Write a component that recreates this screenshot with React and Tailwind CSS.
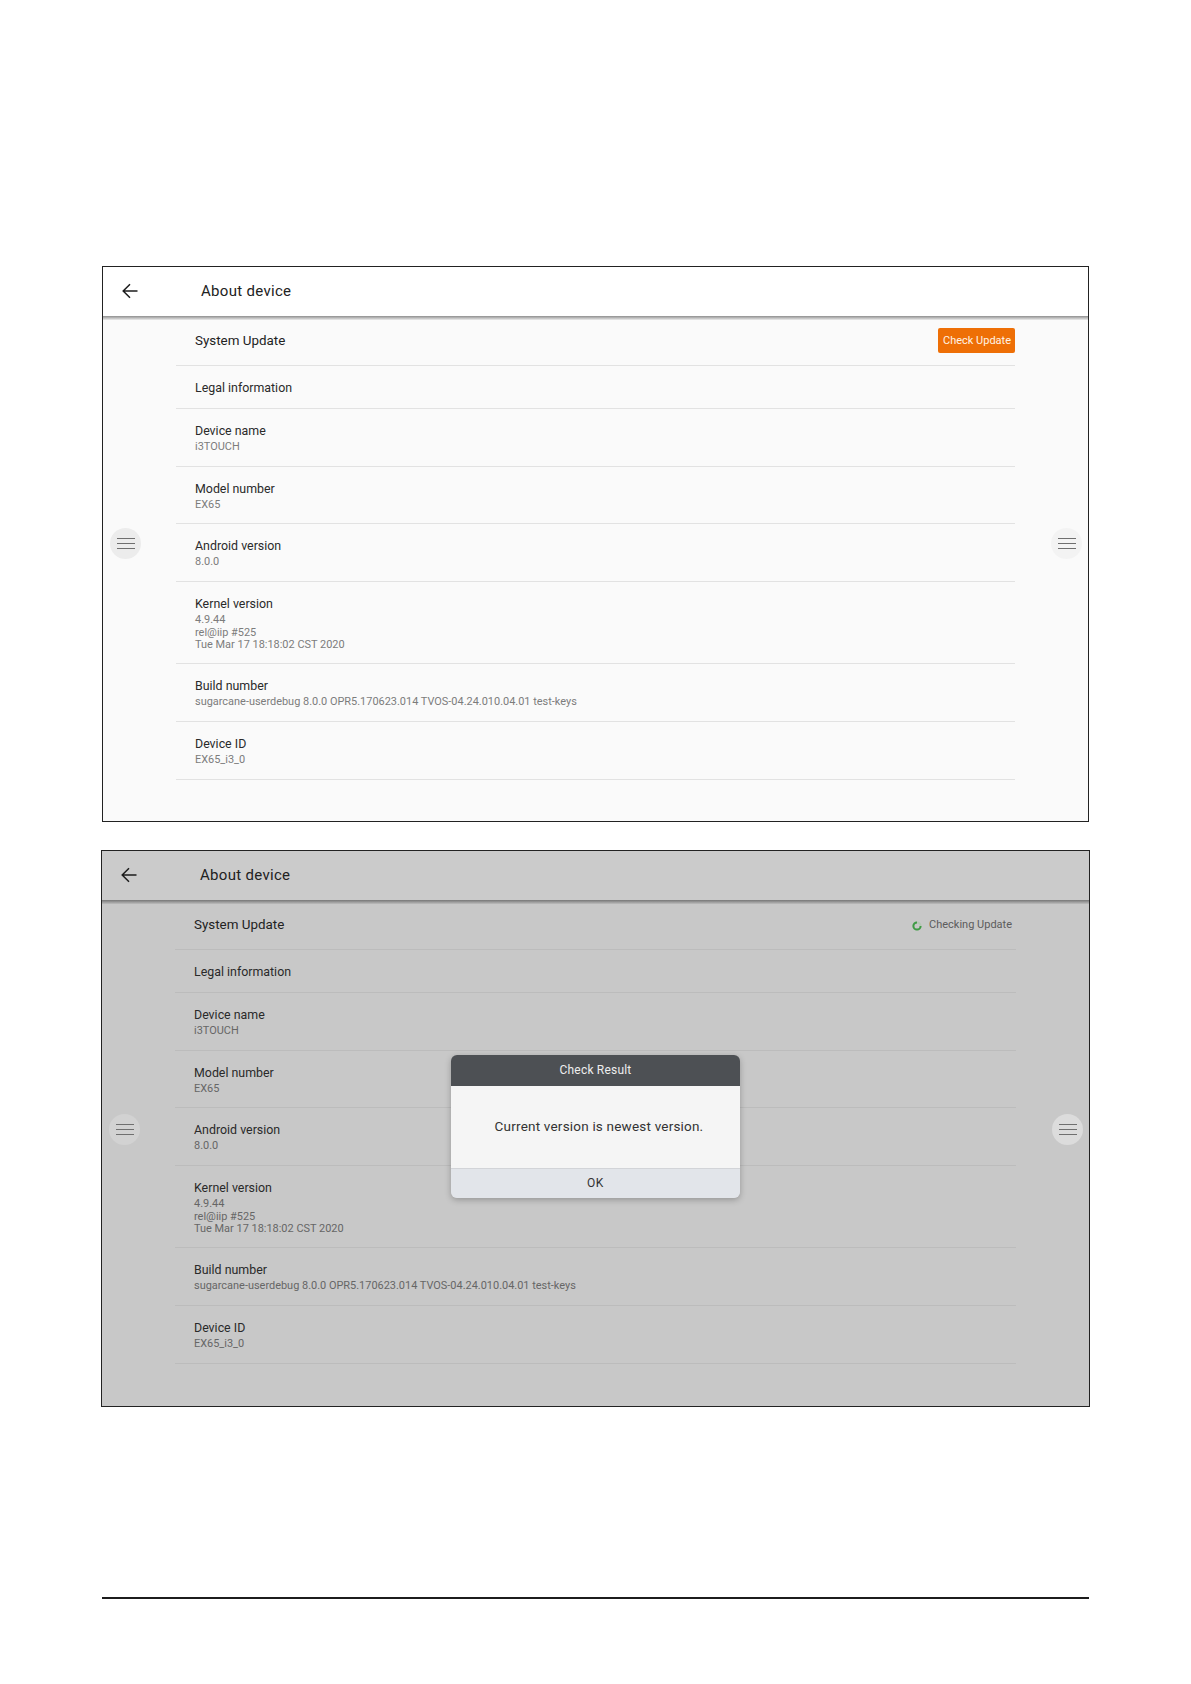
const rows = [
  { t: "Legal information", h: "h-[43px]" },
  { t: "Device name", s: ["i3TOUCH"], h: "h-[58px]" },
  { t: "Model number", s: ["EX65"], h: "h-[57px]" },
  { t: "Android version", s: ["8.0.0"], h: "h-[58px]" },
  { t: "Kernel version", s: ["4.9.44", "rel@iip #525", "Tue Mar 17 18:18:02 CST 2020"], h: "h-[82px]" },
  { t: "Build number", s: ["sugarcane-userdebug 8.0.0 OPR5.170623.014 TVOS-04.24.010.04.01 test-keys"], h: "h-[58px]" },
  { t: "Device ID", s: ["EX65_i3_0"], h: "h-[58px]" },
];

function Handle({ dim, side }) {
  const fill = dim
    ? side === "left" ? "bg-[#d2d2d2]" : "bg-[#dcdcdc]"
    : side === "left" ? "bg-[#ececec]" : "bg-[#f3f3f3]";
  return (
    <div
      className={`absolute flex h-[31px] w-[31px] flex-col items-center justify-center gap-[4px] rounded-full ${dim ? "top-[263px]" : "top-[261px]"} ${side === "left" ? "left-[7px]" : "right-[6px]"} ${fill}`}
    >
      <span className="h-px w-[18px] bg-[#6f6f6f]" />
      <span className="h-px w-[18px] bg-[#6f6f6f]" />
      <span className="h-px w-[18px] bg-[#6f6f6f]" />
    </div>
  );
}

function Panel({ dim, children }) {
  return (
    <div className={`relative border ${dim ? "mt-[28px] ml-[101px] h-[557px] w-[989px] border-[#222] bg-[#c8c8c8]" : "ml-[102px] h-[556px] w-[987px] border-[#222] bg-[#fafafa]"}`}>
      <div className={`flex h-[49px] items-center ${dim ? "bg-[#cbcbcb]" : "bg-white"}`}>
        <svg width="16" height="16" viewBox="0 0 16 16" className="mb-[1px] ml-[19px] shrink-0" fill="none" stroke="#1c1c1c" strokeWidth="1.5">
          <path d="M15.5 8H1.2M8 1.2L1.2 8L8 14.8" />
        </svg>
        <span className="ml-[63px] text-[15px] tracking-[0.3px] text-[#222]">About device</span>
      </div>
      <div className={`h-[4px] bg-gradient-to-b ${dim ? "from-[#777] to-[#bdbdbd]" : "from-[#8f8f8f] to-[#ececec]"}`} />
      <div className="mx-[73px]">
        <div className={`flex h-[46px] items-center justify-between border-b pb-[3px] pl-[19px] ${dim ? "border-[#bcbcbc]" : "border-[#e2e2e2]"}`}>
          <span className="text-[13.4px] text-[#222]">System Update</span>
          {dim ? (
            <span className="mt-[1px] mr-[4px] flex items-center gap-[6px] text-[11px] text-[#5c5c5c]">
              <svg width="12" height="12" viewBox="0 0 12 12" fill="none" strokeWidth="2">
                <circle cx="6" cy="6" r="3.6" stroke="#b4c8b4" />
                <path d="M6 2.4A3.6 3.6 0 1 0 9.6 6" stroke="#3f9a45" />
              </svg>
              Checking Update
            </span>
          ) : (
            <span className="mb-[1px] flex h-[25px] w-[77px] items-center justify-center rounded-[2px] bg-[#ee6f06] pt-[1px] pl-[1px] text-[11px] text-[#fff3e6]">Check Update</span>
          )}
        </div>
        {rows.map((r) => (
          <div key={r.t} className={`${r.h} border-b pt-[14px] pl-[19px] ${dim ? "border-[#bcbcbc]" : "border-[#e2e2e2]"}`}>
            <div className="text-[12.4px] leading-[16px] text-[#2a2a2a]">{r.t}</div>
            <div className="mt-[2px]">
              {r.s && r.s.map((l) => (
                <div key={l} className={`text-[10.95px] leading-[12.5px] ${dim ? "text-[#666]" : "text-[#7c7c7c]"}`}>{l}</div>
              ))}
            </div>
          </div>
        ))}
      </div>
      <Handle dim={dim} side="left" />
      <Handle dim={dim} side="right" />
      {children}
    </div>
  );
}

export default function App() {
  return (
    <div className="h-[1684px] w-[1191px] overflow-hidden bg-white pt-[266px] font-['Roboto',sans-serif]">
      <Panel />
      <Panel dim>
        <div className="absolute top-[204px] left-[349px] w-[289px] overflow-hidden rounded-[6px] shadow-[0_2px_6px_rgba(0,0,0,0.25)]">
          <div className="flex h-[31px] items-center justify-center bg-[#4d5054] pb-[1px] text-[12px] tracking-[0.2px] text-[#eeeeee]">Check Result</div>
          <div className="flex h-[82px] items-center justify-center bg-[#f5f5f5] pb-[2px] pl-[7px] text-[13.5px] tracking-[0.2px] text-[#333]">Current version is newest version.</div>
          <div className="flex h-[30px] items-center justify-center border-t border-[#d2d4d8] bg-[#e2e5ea] pb-[1px] text-[12px] tracking-[0.5px] text-[#333]">OK</div>
        </div>
      </Panel>
      <div className="mt-[190px] ml-[102px] h-[2px] w-[987px] bg-[#1c1c1c]" />
    </div>
  );
}
